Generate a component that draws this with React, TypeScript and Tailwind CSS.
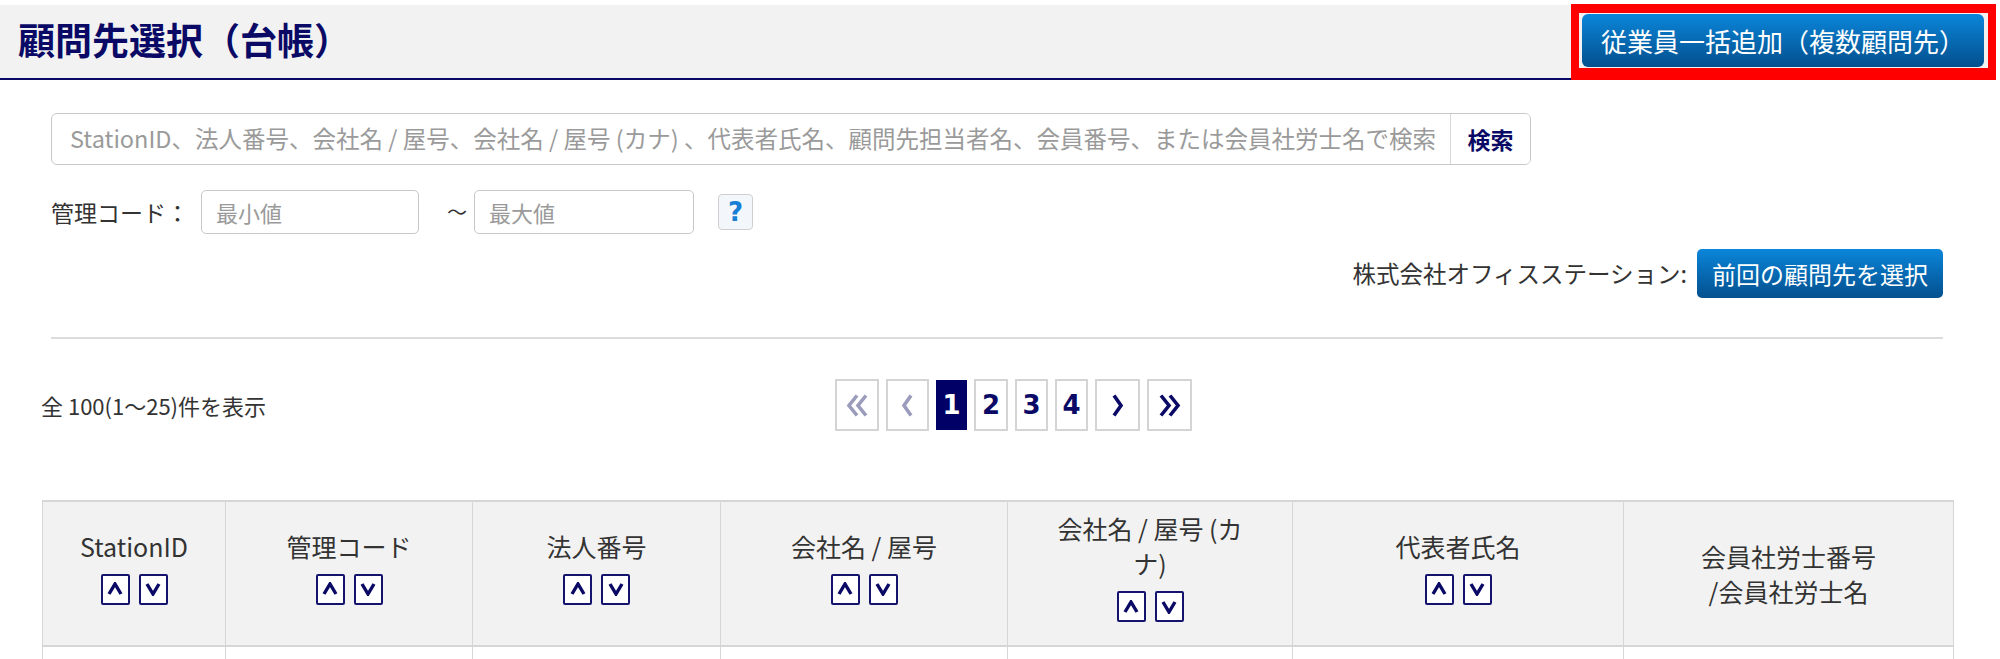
import React from 'react';

const NAVY = '#0a0a66';

type Col = { label: React.ReactNode; width: string; sortable: boolean };

const columns: Col[] = [
  { label: 'StationID', width: 'w-[183px]', sortable: true },
  { label: '管理コード', width: 'w-[247px]', sortable: true },
  { label: '法人番号', width: 'w-[248px]', sortable: true },
  { label: '会社名 / 屋号', width: 'w-[287px]', sortable: true },
  { label: <>会社名 / 屋号 (カ<br />ナ)</>, width: 'w-[285px]', sortable: true },
  { label: '代表者氏名', width: 'w-[331px]', sortable: true },
  { label: <>会員社労士番号<br />/会員社労士名</>, width: 'w-[330px]', sortable: false },
];

const SortBox = ({ dir }: { dir: 'up' | 'down' }) => (
  <span className="inline-flex h-[31px] w-[29px] items-center justify-center rounded-[2px] border-2 border-[#14146e] bg-white">
    <svg width="16" height="14" viewBox="0 0 16 14" fill="none">
      <polyline
        points={dir === 'up' ? '2,12 8,2 14,12' : '2,2 8,12 14,2'}
        stroke="#0a0a66"
        strokeWidth="3.4"
        strokeLinejoin="miter"
      />
    </svg>
  </span>
);

const Chevron = ({ double, left, disabled }: { double?: boolean; left?: boolean; disabled?: boolean }) => {
  const color = disabled ? '#9b9bbb' : NAVY;
  let d = '';
  if (double) d = left ? 'M12 2 L4 12 L12 22 M21 2 L13 12 L21 22' : 'M4 2 L12 12 L4 22 M13 2 L21 12 L13 22';
  else d = left ? 'M11 2 L4 12 L11 22' : 'M4 2 L11 12 L4 22';
  return (
    <svg width={double ? 25 : 15} height="25" viewBox={double ? '0 0 25 24' : '0 0 15 24'} fill="none">
      <path d={d} stroke={color} strokeWidth="3.6" strokeLinejoin="miter" />
    </svg>
  );
};

const PageBox = ({ children, w, active }: { children: React.ReactNode; w: string; active?: boolean }) => (
  <div
    className={`flex items-center justify-center font-bold text-[26px] ${w} ${
      active ? 'h-[50px] border-2 border-[#000066] bg-[#000066] text-white' : 'h-[52px] border-2 border-[#d4d4d4] bg-white text-[#0a0a66]'
    }`}
    style={{ fontFamily: '"DejaVu Sans", Verdana, sans-serif' }}
  >
    {children}
  </div>
);

export default function App() {
  return (
    <div
      className="h-[659px] w-[2000px] overflow-hidden bg-white text-[#333]"
      style={{ fontFamily: '"Noto Sans CJK JP", "Noto Sans", sans-serif' }}
    >
      {/* Header */}
      <div className="mt-[5px] flex items-start">
        <div className="flex h-[75px] flex-1 items-center border-b-2 border-[#0a0a66] bg-[#f2f2f2] pb-[4px] pl-[18px]">
          <h1 className="text-[37px] font-bold leading-none text-[#0a0a66]">顧問先選択（台帳）</h1>
        </div>
        <div className="-mt-px mr-[4px] h-[76px] w-[425px] border-x-8 border-b-[12px] border-t-[9px] border-[#ff0000] bg-[#f2f2f2] px-[3px] pt-px">
          <button className="flex h-[53px] w-[402px] items-center justify-center rounded-[6px] bg-linear-to-b from-[#0b86da] to-[#04508e] text-[26px] text-white">
            従業員一括追加（複数顧問先）
          </button>
        </div>
      </div>

      {/* Search area */}
      <div className="pl-[51px] pr-[57px]">
        <div className="mt-[33px] flex h-[52px] w-[1480px] overflow-hidden rounded-[6px] border border-[#c8c8c8]">
          <input
            className="flex-1 pl-[18px] text-[23.5px] outline-none placeholder:text-[#9a9a9a]"
            placeholder="StationID、法人番号、会社名 / 屋号、会社名 / 屋号 (カナ) 、代表者氏名、顧問先担当者名、会員番号、または会員社労士名で検索"
          />
          <button className="w-[80px] border-l border-[#d8d8d8] bg-white text-[23px] font-bold text-[#0a0a66]">検索</button>
        </div>

        <div className="mt-[25px] flex h-[44px] items-center">
          <span className="mr-[12px] text-[23px]">管理コード：</span>
          <input
            className="h-[44px] w-[218px] rounded-[5px] border border-[#c8c8c8] pl-[14px] text-[22px] outline-none placeholder:text-[#9a9a9a]"
            placeholder="最小値"
          />
          <span className="ml-[28px] mr-[7px] text-[20px]">～</span>
          <input
            className="h-[44px] w-[220px] rounded-[5px] border border-[#c8c8c8] pl-[14px] text-[22px] outline-none placeholder:text-[#9a9a9a]"
            placeholder="最大値"
          />
          <button className="ml-[24px] flex h-[36px] w-[35px] items-center justify-center rounded-[4px] border border-[#cfcfcf] bg-[#f3f7fb] text-[26px] font-bold text-[#1a7fd4]" style={{ fontFamily: '"DejaVu Sans", sans-serif' }}>
            ?
          </button>
        </div>

        <div className="mt-[15px] flex items-center justify-end">
          <span className="mr-[10px] text-[23.5px]">株式会社オフィスステーション:</span>
          <button className="flex h-[49px] w-[246px] items-center justify-center rounded-[5px] bg-linear-to-b from-[#0b86da] to-[#04508e] text-[24px] text-white">
            前回の顧問先を選択
          </button>
        </div>

        <div className="mt-[39px] h-[2px] bg-[#dcdcdc]" />
      </div>

      {/* Count + pagination */}
      <div className="mt-[40px] flex items-center pl-[41px]">
        <span className="w-[794px] text-[22px]">全 100(1～25)件を表示</span>
        <div className="flex items-center gap-[7px]">
          <PageBox w="w-[44px]"><Chevron double left disabled /></PageBox>
          <PageBox w="w-[43px]"><Chevron left disabled /></PageBox>
          <PageBox w="w-[31px]" active>1</PageBox>
          <PageBox w="w-[34px]">2</PageBox>
          <PageBox w="w-[33px]">3</PageBox>
          <PageBox w="w-[33px]">4</PageBox>
          <PageBox w="w-[45px]"><Chevron /></PageBox>
          <PageBox w="w-[45px]"><Chevron double /></PageBox>
        </div>
      </div>

      {/* Table */}
      <div className="mt-[69px] pl-[42px]">
        <table className="w-[1911px] table-fixed border-collapse">
          <thead>
            <tr className="h-[145px] border-t-2 border-b-2 border-[#d6d6d6] bg-[#f2f2f2]">
              {columns.map((c, i) => (
                <th key={i} className={`${c.width} border-x border-[#d6d6d6] px-[20px] align-middle text-[25px] font-normal leading-[35px] text-[#333]`}>
                  <div>{c.label}</div>
                  {c.sortable ? (
                    <div className="mb-[14px] mt-[10px] flex justify-center gap-[9px]">
                      <SortBox dir="up" />
                      <SortBox dir="down" />
                    </div>
                  ) : null}
                </th>
              ))}
            </tr>
          </thead>
          <tbody>
            <tr className="h-[60px]">
              {columns.map((_, i) => (
                <td key={i} className="border-x border-[#d6d6d6]" />
              ))}
            </tr>
          </tbody>
        </table>
      </div>
    </div>
  );
}
